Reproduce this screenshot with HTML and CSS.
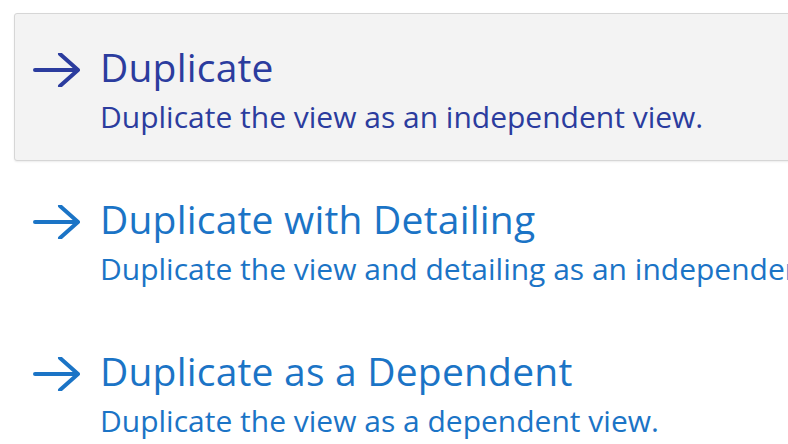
FILE: index.html
```html
<!DOCTYPE html>
<html lang="en">
<head>
<meta charset="utf-8">
<link rel="stylesheet" href="styles.css">
</head>
<body>
<div class="panel">
  <div class="cmd cmd-hover">
    <svg class="arrow" viewBox="0 0 48 34" width="48" height="34"><path d="M2 17 H45 M27 1 L45 17 L27 33" fill="none" stroke="currentColor" stroke-width="4" stroke-linecap="round" stroke-linejoin="round"/></svg>
    <div class="text">
      <div class="title">Duplicate</div>
      <div class="desc">Duplicate the view as an independent view.</div>
    </div>
  </div>
  <div class="cmd">
    <svg class="arrow" viewBox="0 0 48 34" width="48" height="34"><path d="M2 17 H45 M27 1 L45 17 L27 33" fill="none" stroke="currentColor" stroke-width="4" stroke-linecap="round" stroke-linejoin="round"/></svg>
    <div class="text">
      <div class="title">Duplicate with Detailing</div>
      <div class="desc">Duplicate the view and detailing as an independent view.</div>
    </div>
  </div>
  <div class="cmd">
    <svg class="arrow" viewBox="0 0 48 34" width="48" height="34"><path d="M2 17 H45 M27 1 L45 17 L27 33" fill="none" stroke="currentColor" stroke-width="4" stroke-linecap="round" stroke-linejoin="round"/></svg>
    <div class="text">
      <div class="title">Duplicate as a Dependent</div>
      <div class="desc">Duplicate the view as a dependent view.</div>
    </div>
  </div>
</div>
</body>
</html>
```
FILE: styles.css
```css
html, body {
  margin: 0;
  padding: 0;
  background: #ffffff;
  overflow: hidden;
}
body {
  width: 788px;
  height: 444px;
  font-family: "Open Sans", "Noto Sans", sans-serif;
}
.panel {
  display: flex;
  flex-direction: column;
  gap: 4px;
  padding: 13px 0 0 14px;
  width: 1000px;
}
.cmd {
  display: flex;
  align-items: flex-start;
  gap: 19px;
  height: 148px;
  box-sizing: border-box;
  padding: 31px 18px 0 18px;
  border: 1px solid transparent;
  border-radius: 3px;
  color: #1b74c6;
}
.cmd-hover {
  background: #f3f3f3;
  border-color: #d6d6d6;
  box-shadow: 0 1px 2px rgba(0,0,0,0.08);
  color: #2b3c9e;
}
.arrow {
  flex: none;
  margin-top: 8px;
}
.text {
  display: flex;
  flex-direction: column;
}
.title {
  font-size: 39px;
  line-height: 44px;
  white-space: nowrap;
  letter-spacing: 0.2px;
}
.desc {
  font-size: 30px;
  line-height: 36px;
  font-weight: 500;
  white-space: nowrap;
  margin-top: 10px;
}
```
